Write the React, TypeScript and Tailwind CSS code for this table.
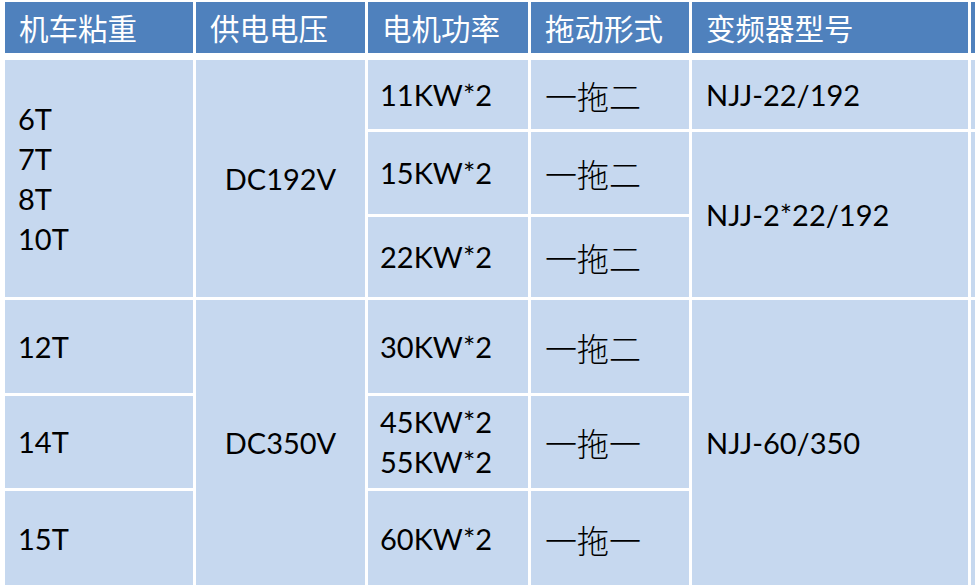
const cols = 'grid grid-cols-[188px_169px_160px_158px_276px_100px] gap-[3px]';

const headers = ['机车粘重', '供电电压', '电机功率', '拖动形式', '变频器型号', ''];

function Cell({
  children,
  className = '',
}: {
  children?: React.ReactNode;
  className?: string;
}) {
  return (
    <div className={`flex items-center bg-[#c6d8ef] text-black ${className}`}>
      {children}
    </div>
  );
}

export default function App() {
  return (
    <div
      className="w-[975px] h-[585px] overflow-hidden bg-white pt-[2px] pl-[5px]"
      style={{ fontFamily: 'Lato, "Noto Sans CJK SC", sans-serif' }}
    >
      {/* header */}
      <div className={`${cols} grid-rows-[51px] mb-[7px]`}>
        {headers.map((h, i) => (
          <div
            key={i}
            className="flex items-center bg-[#4f81bd] pl-[14px] text-white text-[29.5px] leading-none"
            style={{ fontFamily: '"Noto Sans CJK SC", sans-serif' }}
          >
            {h}
          </div>
        ))}
      </div>

      {/* body */}
      <div className={`${cols} grid-rows-[69px_82px_80px_93px_92px_95px] text-[29px] leading-[40px]`}>
        {/* column 1 */}
        <Cell className="row-start-1 row-span-3 col-start-1 pl-[13px]">
          <div className="flex flex-col">
            <span>6T</span>
            <span>7T</span>
            <span>8T</span>
            <span>10T</span>
          </div>
        </Cell>
        <Cell className="row-start-4 col-start-1 pl-[13px]">12T</Cell>
        <Cell className="row-start-5 col-start-1 pl-[13px]">14T</Cell>
        <Cell className="row-start-6 col-start-1 pl-[13px]">15T</Cell>

        {/* column 2 */}
        <Cell className="row-start-1 row-span-3 col-start-2 justify-center">DC192V</Cell>
        <Cell className="row-start-4 row-span-3 col-start-2 justify-center">DC350V</Cell>

        {/* column 3 */}
        <Cell className="row-start-1 col-start-3 pl-[12px]">11KW*2</Cell>
        <Cell className="row-start-2 col-start-3 pl-[12px]">15KW*2</Cell>
        <Cell className="row-start-3 col-start-3 pl-[12px]">22KW*2</Cell>
        <Cell className="row-start-4 col-start-3 pl-[12px]">30KW*2</Cell>
        <Cell className="row-start-5 col-start-3 pl-[12px]">
          <div className="flex flex-col">
            <span>45KW*2</span>
            <span>55KW*2</span>
          </div>
        </Cell>
        <Cell className="row-start-6 col-start-3 pl-[12px]">60KW*2</Cell>

        {/* column 4 */}
        {['一拖二', '一拖二', '一拖二', '一拖二', '一拖一', '一拖一'].map((t, i) => (
          <Cell key={i} className="col-start-4 pl-[14px] text-[32px] text-[#111]">
            <span style={{ fontFamily: '"Noto Sans CJK SC", sans-serif', fontWeight: 300 }}>{t}</span>
          </Cell>
        ))}

        {/* column 5 */}
        <Cell className="row-start-1 col-start-5 pl-[14px]">NJJ-22/192</Cell>
        <Cell className="row-start-2 row-span-2 col-start-5 pl-[14px]">NJJ-2*22/192</Cell>
        <Cell className="row-start-4 row-span-3 col-start-5 pl-[14px]">NJJ-60/350</Cell>

        {/* column 6, cut off at the edge */}
        <Cell className="row-start-1 col-start-6" />
        <Cell className="row-start-2 row-span-2 col-start-6" />
        <Cell className="row-start-4 row-span-3 col-start-6" />
      </div>
    </div>
  );
}
